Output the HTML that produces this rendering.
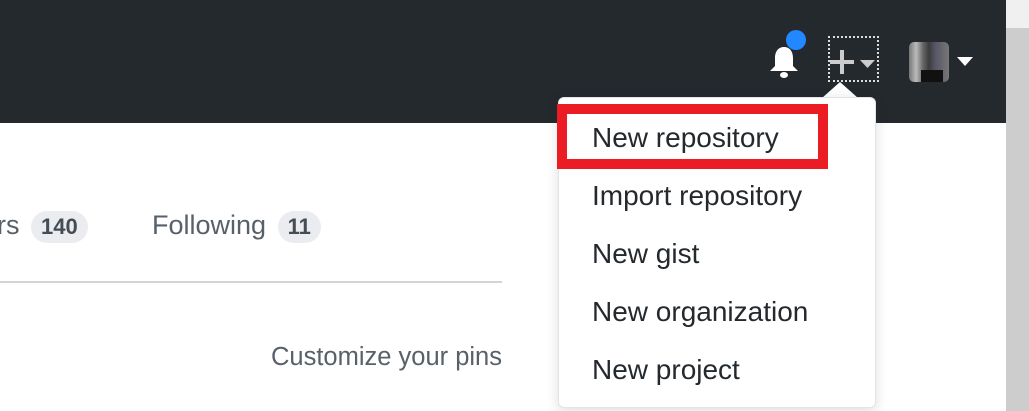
<!DOCTYPE html>
<html><head><meta charset="utf-8"><style>
*{margin:0;padding:0;box-sizing:border-box}
body{width:1029px;height:411px;overflow:hidden;background:#fff;font-family:"Liberation Sans",sans-serif;position:relative}
.hdr{position:absolute;left:0;top:0;width:1006px;height:123px;background:#24292e}
.sb{position:absolute;left:1006px;top:0;width:23px;height:411px;background:#f0f0f0}
.thumb{position:absolute;left:1006px;top:28px;width:23px;height:383px;background:#cdcdcd}
.t{position:absolute;font-size:27px;color:#24292e;white-space:nowrap}
.g{color:#586069}
.cnt{display:inline-block;background:#eaecef;border-radius:16px;padding:0 10px;font-size:22px;font-weight:bold;color:#444d56;line-height:32px;vertical-align:middle;margin-left:4px}
.dd{position:absolute;left:558px;top:97px;width:318px;height:311px;background:#fff;border:1px solid #e1e4e8;border-radius:6px;box-shadow:0 3px 12px rgba(27,31,35,.15)}
.red{position:absolute;left:557px;top:104px;width:271px;height:65px;border:10px solid #ec1c24}
.mi{position:absolute;left:592px;font-size:28px;color:#24292e;white-space:nowrap}
</style></head><body>
<div class="hdr"></div>
<div class="sb"></div><div class="thumb"></div>
<svg style="position:absolute;left:766px;top:44px" width="36" height="36" viewBox="0 0 36 36"><path d="M18 3c-6 0-9 5-9 11v8l-5 5h28l-5-5v-8c0-6-3-11-9-11z" fill="#fff"/><ellipse cx="18" cy="31" rx="4" ry="3" fill="#fff"/></svg>
<div style="position:absolute;left:786px;top:30px;width:20px;height:20px;border-radius:50%;background:#2188ff"></div>
<div style="position:absolute;left:828px;top:36px;width:51px;height:46px;border:2px dotted #ddd"></div>
<svg style="position:absolute;left:828px;top:48px" width="28" height="28" viewBox="0 0 28 28"><path d="M14 2v24M2 14h24" stroke="#ccc" stroke-width="4"/></svg>
<svg style="position:absolute;left:860px;top:60px" width="16" height="9"><path d="M0 0h15l-7.5 8z" fill="#ccc"/></svg>
<div style="position:absolute;left:909px;top:42px;width:40px;height:40px;border-radius:5px;overflow:hidden;background:linear-gradient(90deg,#777 0,#bbb 18%,#666 35%,#3c3c3c 50%,#556 65%,#777 100%)"><div style="position:absolute;left:12px;top:28px;width:22px;height:12px;background:#111"></div></div>
<svg style="position:absolute;left:957px;top:57px" width="17" height="10"><path d="M0 0h16l-8 9z" fill="#fff"/></svg>
<div class="t g" style="left:-3px;top:210px">rs <span class="cnt">140</span></div>
<div class="t g" style="left:152px;top:210px">Following <span class="cnt">11</span></div>
<div style="position:absolute;left:0;top:281px;width:502px;height:2px;background:#d1d5da"></div>
<div class="t g" style="right:527px;top:343px;font-size:25.5px">Customize your pins</div>
<svg style="position:absolute;left:822px;top:82px" width="36" height="17"><path d="M0 16L18 0l18 16z" fill="#fff"/></svg>
<div class="dd"></div>
<div class="mi" style="top:122px">New repository</div>
<div class="mi" style="top:180px">Import repository</div>
<div class="mi" style="top:238px">New gist</div>
<div class="mi" style="top:296px">New organization</div>
<div class="mi" style="top:354px">New project</div>
<div class="red"></div>
</body></html>
